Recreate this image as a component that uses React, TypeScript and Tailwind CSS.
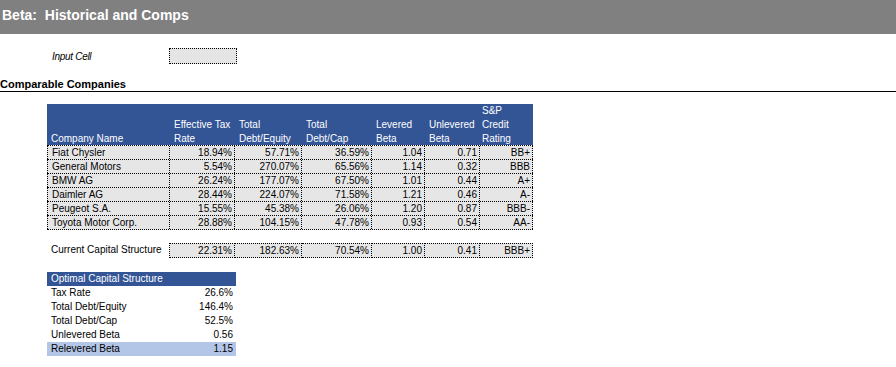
import React from 'react';

const comps = [
  ['Fiat Chysler', '18.94%', '57.71%', '36.59%', '1.04', '0.71', 'BB+'],
  ['General Motors', '5.54%', '270.07%', '65.56%', '1.14', '0.32', 'BBB'],
  ['BMW AG', '26.24%', '177.07%', '67.50%', '1.01', '0.44', 'A+'],
  ['Daimler AG', '28.44%', '224.07%', '71.58%', '1.21', '0.46', 'A-'],
  ['Peugeot S.A.', '15.55%', '45.38%', '26.06%', '1.20', '0.87', 'BBB-'],
  ['Toyota Motor Corp.', '28.88%', '104.15%', '47.78%', '0.93', '0.54', 'AA-'],
];

const current = ['22.31%', '182.63%', '70.54%', '1.00', '0.41', 'BBB+'];

const optimal = [
  ['Tax Rate', '26.6%'],
  ['Total Debt/Equity', '146.4%'],
  ['Total Debt/Cap', '52.5%'],
  ['Unlevered Beta', '0.56'],
  ['Relevered Beta', '1.15'],
];

const cols = 'grid grid-cols-[123px_65px_67px_70px_53px_55px_53px]';

export default function App() {
  return (
    <div className="w-[896px] h-[367px] bg-white text-black font-['Liberation_Sans',Arial,sans-serif] overflow-hidden">
      {/* title bar */}
      <div className="h-[34px] bg-[#808080] pl-[2px] pt-[3px]">
        <span className="text-white font-bold text-[14px] leading-[17px] whitespace-pre">Beta:  Historical and Comps</span>
      </div>

      <div className="mt-[14px] flex items-center h-[16px]">
        <span className="pl-[52px] w-[169px] italic text-[10px] tracking-[-0.3px]">Input Cell</span>
        <div className="w-[68px] h-[16px] bg-[#e5e5e5] border border-dotted border-black" />
      </div>

      <div className="mt-[14px] h-[14px] border-b border-black text-[11px] font-bold leading-[12px]">
        Comparable Companies
      </div>

      {/* comps table */}
      <div className="mt-[12px] ml-[47px] w-[486px] text-[10px]">
        <div className={`${cols} h-[41px] bg-[#335595] text-white leading-[14px]`}>
          <div className="flex items-end pl-[4px]">Company Name</div>
          <div className="flex items-end pl-[4px]">Effective Tax<br />Rate</div>
          <div className="flex items-end pl-[4px]">Total<br />Debt/Equity</div>
          <div className="flex items-end pl-[4px]">Total<br />Debt/Cap</div>
          <div className="flex items-end pl-[4px]">Levered<br />Beta</div>
          <div className="flex items-end pl-[4px]">Unlevered<br />Beta</div>
          <div className="flex items-end pl-[2px]">S&amp;P<br />Credit<br />Rating</div>
        </div>
        <div className="border-t border-dotted border-black">
          {comps.map((r) => (
            <div key={r[0]} className={`${cols} h-[14px] bg-[#e6e6e6] border-b border-dotted border-black leading-[13px]`}>
              <div className="border-l border-r border-dotted border-black pl-[4px]">{r[0]}</div>
              {r.slice(1).map((v, i) => (
                <div key={i} className="border-r border-dotted border-black text-right pr-[2px]">{v}</div>
              ))}
            </div>
          ))}
        </div>

        <div className={`${cols} mt-[13px] h-[15px] leading-[13px]`}>
          <div className="pl-[4px] border-r border-dotted border-black">Current Capital Structure</div>
          {current.map((v, i) => (
            <div key={i} className="bg-[#e6e6e6] border-t border-b border-r border-dotted border-black text-right pr-[2px]">{v}</div>
          ))}
        </div>
      </div>

      {/* optimal table */}
      <div className="mt-[14px] ml-[47px] w-[189px] text-[10px] leading-[14px]">
        <div className="h-[14px] bg-[#335595] text-white pl-[4px]">Optimal Capital Structure</div>
        {optimal.map(([k, v]) => (
          <div key={k} className={`flex justify-between h-[14px] pl-[4px] pr-[3px] ${k === 'Relevered Beta' ? 'bg-[#b4c6e7]' : ''}`}>
            <span>{k}</span>
            <span>{v}</span>
          </div>
        ))}
      </div>
    </div>
  );
}
